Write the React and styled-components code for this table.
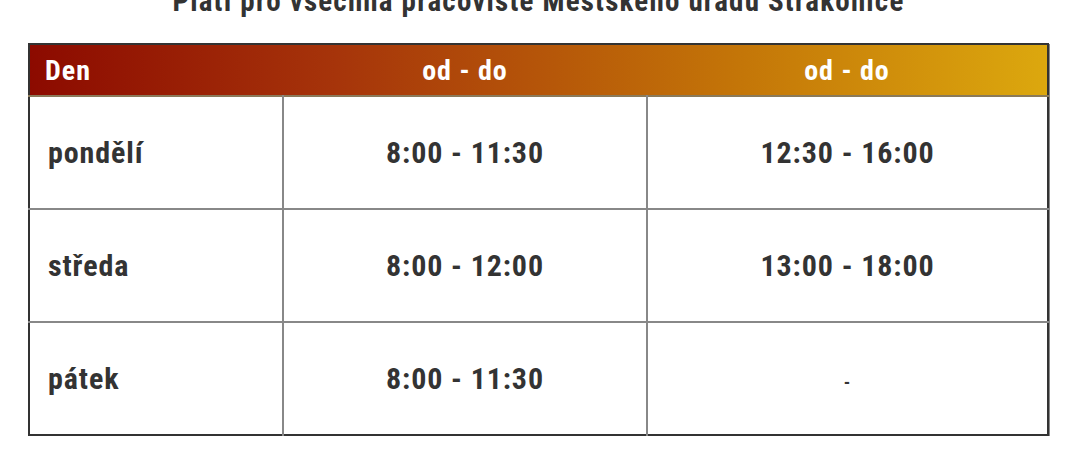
import React from "react";
import styled, { createGlobalStyle } from "styled-components";

const Global = createGlobalStyle`
  html, body { margin: 0; padding: 0; background: #fff; }
  body { font-family: "Roboto Condensed", "Roboto", "Liberation Sans Narrow", sans-serif; font-stretch: 75%; }
`;

const Page = styled.div`
  padding: 0 27px 0 28px;
`;

const Title = styled.h2`
  margin: -14px 0 0;
  height: 57px;
  font-size: 29px;
  line-height: 30px;
  letter-spacing: 1.2px;
  font-weight: 700;
  color: #333;
  text-align: center;
  white-space: nowrap;
`;

const Table = styled.table`
  width: 100%;
  border-collapse: collapse;
  table-layout: fixed;
  border: 2px solid #333;
  box-shadow: 1px 1px 0 #888;
`;

const HeadRow = styled.tr`
  background: linear-gradient(90deg, #8c0a00 0%, #a6340a 30%, #c47608 70%, #dca80e 100%);
  border-bottom: 2px solid #8a7a5a;
`;

const Th = styled.th`
  height: 50px;
  padding: 0 15px;
  font-size: 28px;
  letter-spacing: 1px;
  font-weight: 700;
  color: #fff;
  text-align: ${(p) => (p.$left ? "left" : "center")};
`;

const Row = styled.tr`
  border-top: 2px solid #888;
`;

const Td = styled.td`
  height: 111px;
  padding: 0 18px;
  border-left: 2px solid #888;
  font-size: 30px;
  letter-spacing: 0.9px;
  font-weight: 700;
  color: #333;
  text-align: ${(p) => (p.$left ? "left" : "center")};
  &:first-child { border-left: none; }
`;

const Dash = styled.span`
  font-size: 18px;
`;

const rows = [
  ["pondělí", "8:00 - 11:30", "12:30 - 16:00"],
  ["středa", "8:00 - 12:00", "13:00 - 18:00"],
  ["pátek", "8:00 - 11:30", null],
];

export default function App() {
  return (
    <Page>
      <Global />
      <Title>Platí pro všechna pracoviště Městského úřadu Strakonice</Title>
      <Table>
        <colgroup>
          <col style={{ width: "254px" }} />
          <col style={{ width: "364px" }} />
          <col />
        </colgroup>
        <thead>
          <HeadRow>
            <Th $left>Den</Th>
            <Th>od - do</Th>
            <Th>od - do</Th>
          </HeadRow>
        </thead>
        <tbody>
          {rows.map((r) => (
            <Row key={r[0]}>
              <Td $left>{r[0]}</Td>
              <Td>{r[1]}</Td>
              <Td>{r[2] ?? <Dash>-</Dash>}</Td>
            </Row>
          ))}
        </tbody>
      </Table>
    </Page>
  );
}
